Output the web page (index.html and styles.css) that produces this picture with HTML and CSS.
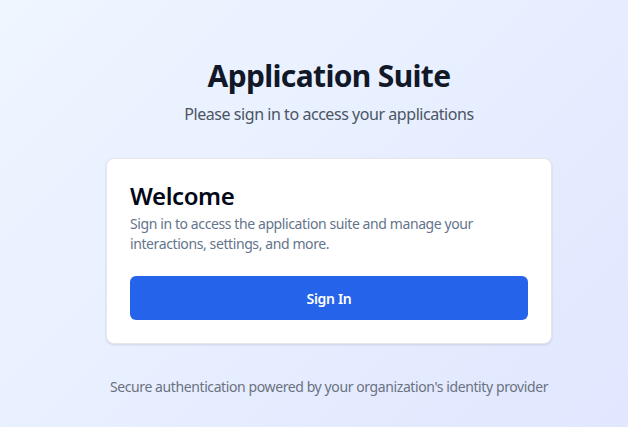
FILE: index.html
```html
<!DOCTYPE html>
<html lang="en">
<head>
<meta charset="utf-8">
<title>Application Suite</title>
<link rel="stylesheet" href="styles.css">
</head>
<body>
<main class="page">
  <div class="wrap">
    <header class="intro">
      <h1 class="title">Application Suite</h1>
      <p class="subtitle">Please sign in to access your applications</p>
    </header>
    <section class="card">
      <div class="card-header">
        <h2 class="card-title">Welcome</h2>
        <p class="card-desc">Sign in to access the application suite and manage your interactions, settings, and more.</p>
      </div>
      <button class="btn" type="button">Sign In</button>
    </section>
    <p class="footer">Secure authentication powered by your organization's identity provider</p>
  </div>
</main>
</body>
</html>
```
FILE: styles.css
```css
* { box-sizing: border-box; }
html, body { margin: 0; height: 100%; }
body {
  font-family: "Noto Sans", "Open Sans", "Liberation Sans", sans-serif;
  background: linear-gradient(135deg, #eff6ff 0%, #e0e7ff 100%);
  color: #111827;
}
.page {
  min-height: 100%;
  padding: 58px 0 0 30px;
  display: flex;
  justify-content: center;
}
.wrap {
  width: 446px;
  display: flex;
  flex-direction: column;
}
.intro { text-align: center; margin-bottom: 32px; }
.title {
  margin: 0 0 8px;
  font-size: 30px;
  line-height: 36px;
  font-weight: 700;
  letter-spacing: -0.65px;
  color: #111827;
}
.subtitle {
  margin: 0;
  font-size: 16px;
  line-height: 24px;
  letter-spacing: -0.45px;
  color: #4b5563;
}
.card {
  background: #fff;
  border: 1px solid #e5e7eb;
  border-radius: 8px;
  box-shadow: 0 1px 3px rgba(0,0,0,0.08), 0 1px 2px rgba(0,0,0,0.04);
  padding: 23px;
  display: flex;
  flex-direction: column;
  gap: 22px;
}
.card-title {
  margin: 0;
  font-size: 24px;
  line-height: 28px;
  font-weight: 600;
  letter-spacing: -0.4px;
  color: #020817;
}
.card-desc {
  margin: 4px 0 0;
  font-size: 14px;
  line-height: 20px;
  letter-spacing: -0.4px;
  color: #64748b;
}
.btn {
  height: 44px;
  border: 0;
  border-radius: 6px;
  background: #2563eb;
  color: #fff;
  font-family: inherit;
  font-size: 14px;
  font-weight: 600;
  letter-spacing: -0.3px;
}
.footer {
  margin: 33px 0 0 -40px;
  width: 526px;
  text-align: center;
  font-size: 14px;
  line-height: 20px;
  letter-spacing: -0.4px;
  color: #6b7280;
}
```
